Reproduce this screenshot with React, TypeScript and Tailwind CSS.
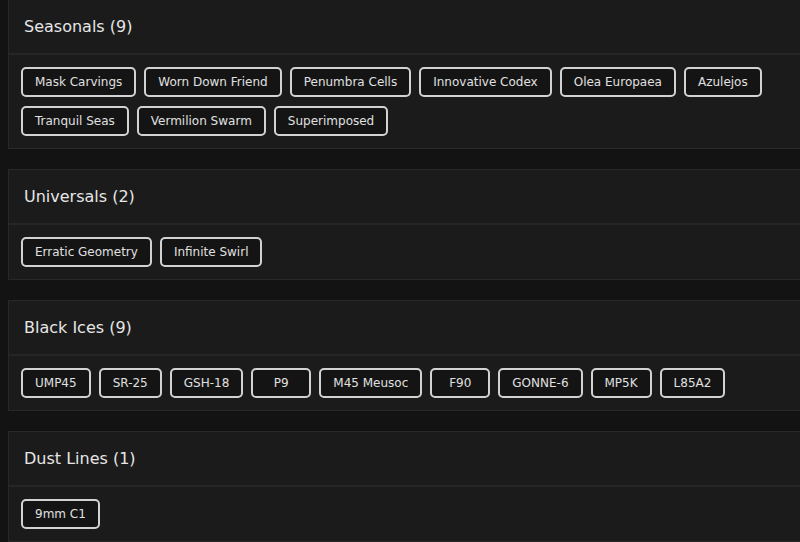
import React from "react";

const sections: { title: string; items: string[] }[] = [
  {
    title: "Seasonals (9)",
    items: [
      "Mask Carvings",
      "Worn Down Friend",
      "Penumbra Cells",
      "Innovative Codex",
      "Olea Europaea",
      "Azulejos",
      "Tranquil Seas",
      "Vermilion Swarm",
      "Superimposed",
    ],
  },
  { title: "Universals (2)", items: ["Erratic Geometry", "Infinite Swirl"] },
  {
    title: "Black Ices (9)",
    items: ["UMP45", "SR-25", "GSH-18", "P9", "M45 Meusoc", "F90", "GONNE-6", "MP5K", "L85A2"],
  },
  { title: "Dust Lines (1)", items: ["9mm C1"] },
];

export default function App() {
  return (
    <div
      className="w-[800px] h-[542px] overflow-hidden bg-[#131313] pl-2"
      style={{ fontFamily: '"DejaVu Sans", sans-serif' }}
    >
      <div className="flex flex-col gap-5 w-[820px] -mt-px">
        {sections.map((s) => (
          <div key={s.title} className="bg-[#1b1b1b] border border-[#282828]">
            <div className="h-[55px] flex items-center pl-[15px] border-b-2 border-[#262626]">
              <span className="text-[16px] font-medium text-[#e6e6e6]">{s.title}</span>
            </div>
            <div className="flex flex-wrap gap-x-[8px] gap-y-[9px] px-3 py-3 w-[790px]">
              {s.items.map((it) => (
                <div
                  key={it}
                  className="h-[30px] min-w-[60px] flex items-center justify-center px-3 border-2 border-[#d2d2d2] rounded-[5px] bg-[#141414] text-[12px] text-[#e0e0e0]"
                >
                  {it}
                </div>
              ))}
            </div>
          </div>
        ))}
      </div>
    </div>
  );
}
